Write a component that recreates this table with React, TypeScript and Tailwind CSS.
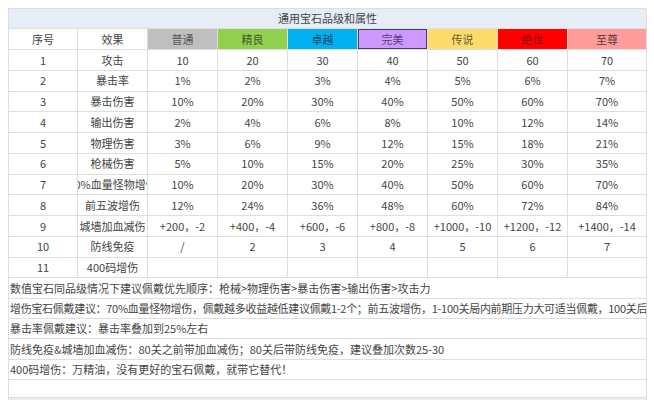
import React from "react";

const headers = [
  { t: "普通", bg: "bg-[#bfbfbf]", c: "text-[#555]", extra: "" },
  { t: "精良", bg: "bg-[#92d050]", c: "text-[#3f5a25]", extra: "" },
  { t: "卓越", bg: "bg-[#00b0f0]", c: "text-[#1d4a66]", extra: "" },
  { t: "完美", bg: "bg-[#cc99ff]", c: "text-[#5a3f7a]", extra: "shadow-[inset_0_0_0_1px_#4b3b5e]" },
  { t: "传说", bg: "bg-[#fcdc6c]", c: "text-[#6a5a30]", extra: "" },
  { t: "绝世", bg: "bg-[#ff0000]", c: "text-[#8a1010]", extra: "" },
  { t: "至尊", bg: "bg-[#ff9c9c]", c: "text-[#5c3a3a]", extra: "" },
];

const rows: [string, string, string[]][] = [
  ["1", "攻击", ["10", "20", "30", "40", "50", "60", "70"]],
  ["2", "暴击率", ["1%", "2%", "3%", "4%", "5%", "6%", "7%"]],
  ["3", "暴击伤害", ["10%", "20%", "30%", "40%", "50%", "60%", "70%"]],
  ["4", "输出伤害", ["2%", "4%", "6%", "8%", "10%", "12%", "14%"]],
  ["5", "物理伤害", ["3%", "6%", "9%", "12%", "15%", "18%", "21%"]],
  ["6", "枪械伤害", ["5%", "10%", "15%", "20%", "25%", "30%", "35%"]],
  ["7", "70%血量怪物增伤", ["10%", "20%", "30%", "40%", "50%", "60%", "70%"]],
  ["8", "前五波增伤", ["12%", "24%", "36%", "48%", "60%", "72%", "84%"]],
  ["9", "城墙加血减伤", ["+200，-2", "+400，-4", "+600，-6", "+800，-8", "+1000，-10", "+1200，-12", "+1400，-14"]],
  ["10", "防线免疫", ["/", "2", "3", "4", "5", "6", "7"]],
  ["11", "400码增伤", ["", "", "", "", "", "", ""]],
];

const notes = [
  "数值宝石同品级情况下建议佩戴优先顺序：枪械>物理伤害>暴击伤害>输出伤害>攻击力",
  "增伤宝石佩戴建议：70%血量怪物增伤，佩戴越多收益越低建议佩戴1-2个；前五波增伤，1-100关局内前期压力大可适当佩戴，100关后可替换",
  "暴击率佩戴建议：暴击率叠加到25%左右",
  "防线免疫&城墙加血减伤：80关之前带加血减伤；80关后带防线免疫，建议叠加次数25-30",
  "400码增伤：万精油，没有更好的宝石佩戴，就带它替代！",
];

const cell =
  "flex items-center justify-center overflow-hidden whitespace-nowrap border-r border-b border-[#dedede]";

export default function App() {
  return (
    <div
      className="w-[654px] h-[400px] overflow-hidden bg-white text-[11px] text-[#454545]"
      style={{ fontFamily: '"Noto Sans CJK SC", "Noto Sans", sans-serif' }}
    >
      <div className="ml-[8px] mt-[8px] w-[638px] border-l border-t border-[#dedede]">
        <div className="grid grid-cols-[69px_70px_70px_70px_70px_70px_70px_70px_79px]">
          <div className={`${cell} col-span-9 h-[20px] bg-[#e6edf7]`}>通用宝石品级和属性</div>
          <div className={`${cell} h-[21px]`}>序号</div>
          <div className={`${cell} h-[21px]`}>效果</div>
          {headers.map((h) => (
            <div key={h.t} className={`${cell} h-[21px] ${h.bg} ${h.c} ${h.extra}`}>
              {h.t}
            </div>
          ))}
          {rows.map(([n, name, vals]) => (
            <React.Fragment key={n}>
              <div className={`${cell} h-[20.75px]`}>{n}</div>
              <div className={`${cell} h-[20.75px]`}>
                <span className="shrink-0">{name}</span>
              </div>
              {vals.map((v, i) => (
                <div key={i} className={`${cell} h-[20.75px]`}>
                  {v}
                </div>
              ))}
            </React.Fragment>
          ))}
          {notes.map((t, i) => (
            <div
              key={i}
              className={`col-span-9 h-[20.4px] flex items-center overflow-hidden whitespace-nowrap border-r border-b border-[#dedede] pl-[1px] ${
                i === 1 ? "tracking-[-0.3px]" : ""
              }`}
            >
              {t}
            </div>
          ))}
          <div className="col-span-9 h-[18px] border-r border-b border-[#dedede]" />
          <div className="col-span-9 h-[20px] bg-[#e6edf7] border-r border-[#dedede]" />
        </div>
      </div>
    </div>
  );
}
